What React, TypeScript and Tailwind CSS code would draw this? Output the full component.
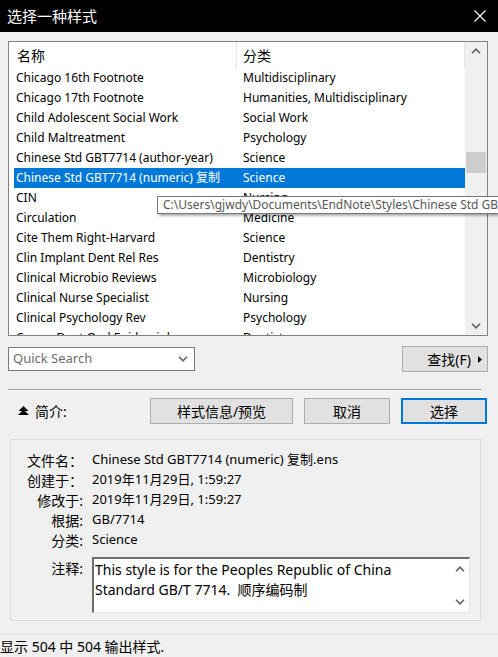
import React from 'react';

const rows: [string, string][] = [
    ['Chicago 16th Footnote', 'Multidisciplinary'],
    ['Chicago 17th Footnote', 'Humanities, Multidisciplinary'],
    ['Child Adolescent Social Work', 'Social Work'],
    ['Child Maltreatment', 'Psychology'],
    ['Chinese Std GBT7714 (author-year)', 'Science'],
    ['Chinese Std GBT7714 (numeric) 复制', 'Science'],
    ['CIN', 'Nursing'],
    ['Circulation', 'Medicine'],
    ['Cite Them Right-Harvard', 'Science'],
    ['Clin Implant Dent Rel Res', 'Dentistry'],
    ['Clinical Microbio Reviews', 'Microbiology'],
    ['Clinical Nurse Specialist', 'Nursing'],
    ['Clinical Psychology Rev', 'Psychology'],
    ['Comm Dent Oral Epidemiol', 'Dentistry'],
];

const SELECTED = 5;

function ChevronUp({ className = '' }: { className?: string }) {
    return (
        <svg width="10" height="6" viewBox="0 0 10 6" className={className}>
            <path d="M1 5.2 L5 1.2 L9 5.2" fill="none" stroke="#606060" strokeWidth="1.6" />
        </svg>
    );
}

function ChevronDown({ className = '' }: { className?: string }) {
    return (
        <svg width="10" height="6" viewBox="0 0 10 6" className={className}>
            <path d="M1 0.8 L5 4.8 L9 0.8" fill="none" stroke="#606060" strokeWidth="1.6" />
        </svg>
    );
}

function Details() {
    const items: [string, string][] = [
        ['文件名：', 'Chinese Std GBT7714 (numeric) 复制.ens'],
        ['创建于：', '2019年11月29日, 1:59:27'],
        ['修改于:', '2019年11月29日, 1:59:27'],
        ['根据:', 'GB/7714'],
        ['分类:', 'Science'],
    ];
    return (
        <div className="ml-[10px] mt-[15px] w-[471px] h-[185px] border border-[#dcdcdc] pt-[10px]">
            {items.map(([k, v]) => (
                <div key={k} className="flex h-[20px] items-center">
                    <div className="w-[72px] text-right text-[14px] text-black">{k}</div>
                    <div className="ml-[9px] text-[13px] text-black">{v}</div>
                </div>
            ))}
            <div className="flex mt-[7px]">
                <div className="w-[72px] text-right text-[14px] leading-[20px] text-black mt-[2px]">注释:</div>
                <div className="ml-[9px] w-[378px] h-[56px] bg-white border-t-2 border-l-2 border-t-[#6e6e6e] border-l-[#6e6e6e] border-r border-b border-r-[#e3e3e3] border-b-[#e3e3e3] flex">
                    <div className="flex-1 pl-[1px] pt-[1px] text-[14px] leading-[20px] text-black">
                        <span className="text-black">This style is for the Peoples Republic of China</span>
                        <br />
                        <span className="text-black">Standard GB/T 7714.&nbsp; 顺序编码制</span>
                    </div>
                    <div className="w-[18px] flex flex-col items-center justify-between py-[7px]">
                        <ChevronUp />
                        <ChevronDown />
                    </div>
                </div>
            </div>
        </div>
    );
}

export default function App() {
    return (
        <div
            className="relative w-[498px] h-[657px] overflow-hidden bg-[#f0f0f0] flex flex-col"
            style={{ fontFamily: '"Noto Sans", "Noto Sans CJK SC", sans-serif' }}
        >
            {/* Title bar */}
            <div className="h-[32px] bg-black flex items-center justify-between pl-[7px] pr-[12px] shrink-0">
                <span className="text-white text-[15px]" style={{ fontFamily: '"Noto Sans CJK SC", sans-serif' }}>
                    选择一种样式
                </span>
                <svg width="12" height="12" viewBox="0 0 12 12">
                    <path d="M0.5 0.5 L11.5 11.5 M11.5 0.5 L0.5 11.5" stroke="#ffffff" strokeWidth="1.1" />
                </svg>
            </div>

            {/* List view */}
            <div className="ml-[8px] mt-[9px] w-[480px] h-[295px] border border-[#828282] bg-white flex shrink-0 overflow-hidden">
                <div className="flex-1 overflow-hidden">
                    <div className="flex h-[26px] items-center text-[14px] text-black">
                        <div className="w-[228px] pl-[8px] h-full flex items-center border-r border-[#e5e5e5]">名称</div>
                        <div className="flex-1 pl-[6px] h-full flex items-center border-r border-[#e5e5e5]">分类</div>
                    </div>
                    {rows.map(([name, cat], i) => (
                        <div
                            key={name}
                            className={`flex h-[20px] items-center text-[12px] ml-[5px] ${
                                i === SELECTED ? 'bg-[#0078d7] text-white' : 'text-black'
                            }`}
                        >
                            <div className="w-[223px] pl-[2px] whitespace-nowrap overflow-hidden">{name}</div>
                            <div className="flex-1 pl-[6px] whitespace-nowrap">{cat}</div>
                        </div>
                    ))}
                </div>
                <div className="w-[22px] bg-[#f0f0f0] flex flex-col items-center">
                    <div className="h-[18px] flex items-center">
                        <ChevronUp />
                    </div>
                    <div className="flex-1 w-full px-[1px] pt-[92px]">
                        <div className="h-[21px] bg-[#cdcdcd]" />
                    </div>
                    <div className="h-[18px] flex items-center">
                        <ChevronDown />
                    </div>
                </div>
            </div>

            {/* Search row */}
            <div className="flex items-center justify-between mt-[10px] pl-[8px] pr-[10px] h-[26px] shrink-0">
                <div className="w-[187px] h-[24px] bg-white border border-[#7a7a7a] flex items-center justify-between pl-[4px] pr-[6px]">
                    <span className="text-[13px] text-[#6d6d6d]">Quick Search</span>
                    <ChevronDown />
                </div>
                <div className="w-[86px] h-[26px] bg-[#e1e1e1] border border-[#adadad] flex items-center justify-end pr-[5px]">
                    <span className="text-[14px] text-black mr-[7px]">查找(F)</span>
                    <svg width="4" height="7" viewBox="0 0 4 7">
                        <path d="M0 0 L4 3.5 L0 7 Z" fill="#000" />
                    </svg>
                </div>
            </div>

            {/* Separator */}
            <div className="ml-[8px] mt-[17px] w-[474px] border-t border-[#a0a0a0] border-b border-b-white shrink-0" />

            {/* Action row */}
            <div className="flex items-center mt-[7px] h-[26px] shrink-0">
                <div className="flex items-center pl-[18px] w-[150px] gap-[6px]">
                    <svg width="11" height="10" viewBox="0 0 11 10">
                        <path d="M5.5 0 L10.5 5 L0.5 5 Z M5.5 3.5 L11 9 L0 9 Z" fill="#000" />
                    </svg>
                    <span className="text-[14px] text-black">简介:</span>
                </div>
                <div className="w-[143px] h-[26px] bg-[#e1e1e1] border border-[#adadad] flex items-center justify-center text-[14px] text-black">
                    样式信息/预览
                </div>
                <div className="ml-[11px] w-[86px] h-[26px] bg-[#e1e1e1] border border-[#adadad] flex items-center justify-center text-[14px] text-black">
                    取消
                </div>
                <div className="ml-[11px] w-[86px] h-[26px] bg-[#e1e1e1] border-2 border-[#0078d7] flex items-center justify-center text-[14px] text-black">
                    选择
                </div>
            </div>

            <Details />

            {/* Status bar */}
            <div className="mt-[13px] border-t border-[#dcdcdc] flex-1 flex items-center text-[14px] text-black pt-[1px]">
                显示 504 中 504 输出样式.
            </div>

            {/* Tooltip */}
            <div className="absolute left-[157px] top-[196px] h-[18px] w-[360px] bg-white border border-[#767676] shadow-[2px_2px_2px_rgba(0,0,0,0.3)] flex items-center pl-[5px] text-[12px] text-[#575757] whitespace-nowrap">
                C:\Users\gjwdy\Documents\EndNote\Styles\Chinese Std GBT7714 (numeric) 复制.ens
            </div>
        </div>
    );
}
